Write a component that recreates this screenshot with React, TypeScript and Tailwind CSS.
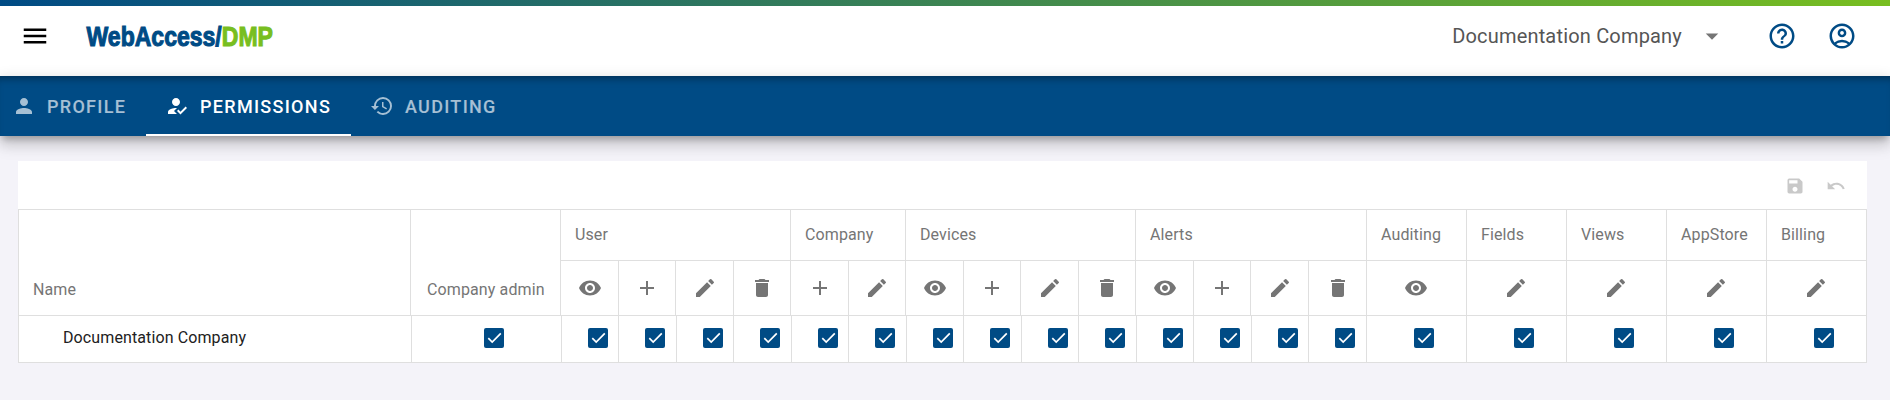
import React from "react";
import { MdMenu, MdPerson, MdHowToReg, MdHistory, MdHelpOutline, MdOutlineAccountCircle, MdArrowDropDown, MdVisibility, MdAdd, MdEdit, MdDelete, MdSave } from "react-icons/md";

type Kind = "view" | "add" | "edit" | "delete";

const icons = { view: MdVisibility, add: MdAdd, edit: MdEdit, delete: MdDelete };

const groups: { name: string; kinds: Kind[]; head: string[]; body: string[] }[] = [
  { name: "User", kinds: ["view", "add", "edit", "delete"], head: ["w-[58px]", "w-[57px]", "w-[58px]", "w-[57px]"], body: ["w-[57px]", "w-[58px]", "w-[57px]", "w-[58px]"] },
  { name: "Company", kinds: ["add", "edit"], head: ["w-[58px]", "w-[57px]"], body: ["w-[57px]", "w-[58px]"] },
  { name: "Devices", kinds: ["view", "add", "edit", "delete"], head: ["w-[58px]", "w-[57px]", "w-[58px]", "w-[57px]"], body: ["w-[57px]", "w-[58px]", "w-[57px]", "w-[58px]"] },
  { name: "Alerts", kinds: ["view", "add", "edit", "delete"], head: ["w-[58px]", "w-[57px]", "w-[58px]", "w-[58px]"], body: ["w-[57px]", "w-[58px]", "w-[57px]", "w-[58px]"] },
  { name: "Auditing", kinds: ["view"], head: ["w-[100px]"], body: ["w-[100px]"] },
  { name: "Fields", kinds: ["edit"], head: ["w-[100px]"], body: ["w-[100px]"] },
  { name: "Views", kinds: ["edit"], head: ["w-[100px]"], body: ["w-[100px]"] },
  { name: "AppStore", kinds: ["edit"], head: ["w-[100px]"], body: ["w-[100px]"] },
  { name: "Billing", kinds: ["edit"], head: ["w-[100px]"], body: ["w-[100px]"] },
];

function Checkbox() {
  return (
    <span role="checkbox" aria-checked="true" className="flex size-5 shrink-0 items-center justify-center rounded-[2px] bg-[#004b85]">
      <svg viewBox="0 0 20 20" className="size-5" fill="none" stroke="white" strokeWidth="1.7">
        <path d="M4.3 10.2 8.2 14 16.8 5.4" />
      </svg>
    </span>
  );
}

function Tab({ icon, label, className }: { icon: React.ReactNode; label: string; className: string }) {
  return (
    <div className={"flex h-[60px] items-center text-[18px] font-medium tracking-[1.3px] " + className}>
      {icon}
      <span>{label}</span>
    </div>
  );
}

export default function App() {
  return (
    <div className="h-[400px] w-full overflow-hidden bg-[#f4f3f9] font-['Roboto',sans-serif]">
      <div className="h-1.5 bg-linear-to-r/srgb from-[#004b85] to-[#78be20]" />
      <header className="flex h-[70px] items-center bg-white pb-2.5 pl-[20px]">
        <MdMenu className="size-[30px] text-black" />
        <svg viewBox="0 0 192 36" className="ml-[36px] h-9 w-[192px] overflow-visible">
          <text transform="translate(0.5 28) scale(0.823 1)" className="font-['Liberation_Sans',sans-serif] text-[28px] font-bold" strokeWidth="1.1">
            <tspan fill="#004b85" stroke="#004b85">WebAccess/</tspan>
            <tspan fill="#78be20" stroke="#78be20">DMP</tspan>
          </text>
        </svg>
        <div className="ml-auto flex items-center">
          <span className="text-[20px] leading-7 tracking-[0.18px] text-[#555]">Documentation Company</span>
          <MdArrowDropDown className="ml-[15px] size-[30px] text-[#757575]" />
          <MdHelpOutline className="ml-[40px] size-[30px] text-[#004b85]" />
          <MdOutlineAccountCircle className="mr-[33px] ml-[30px] size-[30px] text-[#004b85]" />
        </div>
      </header>
      <nav className="flex h-[60px] bg-[#004b85] shadow-[inset_0_8px_8px_-6px_rgba(0,0,0,0.4),0_6px_6px_-3px_rgba(0,0,0,0.2),0_10px_14px_1px_rgba(0,0,0,0.1),0_4px_14px_1px_rgba(0,0,0,0.14)]">
        <Tab icon={<MdPerson className="mr-[11px] size-6" />} label="PROFILE" className="w-[146px] pl-3 text-white/65" />
        <Tab icon={<MdHowToReg className="mr-[11px] size-6" />} label="PERMISSIONS" className="w-[205px] border-b-2 border-white pt-0.5 pl-[19px] text-white" />
        <Tab icon={<MdHistory className="mr-[11px] size-6" />} label="AUDITING" className="pl-[19px] text-white/65" />
      </nav>
      <main className="ml-[18px] w-[1849px] pt-[25px]">
        <div className="flex h-12 items-center justify-end bg-white pt-0.5 text-[#c9c9c9]">
          <MdSave className="mr-[21px] size-5" />
          <svg viewBox="0 0 24 24" className="mr-[21px] size-5" fill="currentColor">
            <path d="M12.5 8C9.85 8 7.45 9 5.6 10.6L2 7v9h9l-3.62-3.62C8.77 11.22 10.54 10.5 12.5 10.5c3.54 0 6.55 2.31 7.6 5.5l2.37-.78C21.08 11.03 17.15 8 12.5 8Z" />
          </svg>
        </div>
        <div className="border-t border-l border-[#dfdfdf] bg-white">
          <div className="flex h-[106px] text-[16px] leading-6 tracking-[0.12px] text-[#757575]">
            <div className="flex w-[392px] items-end border-r border-b border-[#dfdfdf] pb-[13px] pl-3.5">Name</div>
            <div className="flex w-[150px] items-end border-r border-b border-[#dfdfdf] pb-[13px] pl-4 whitespace-nowrap">Company admin</div>
            {groups.map((g) => (
              <div key={g.name}>
                <div className="flex h-[51px] items-center border-r border-b border-[#dfdfdf] pl-3.5">{g.name}</div>
                <div className="flex">
                  {g.kinds.map((k, i) => {
                    const Icon = icons[k];
                    return (
                      <div key={k} className={"flex h-[55px] items-center justify-center border-r border-b border-[#dfdfdf] " + g.head[i] + (g.kinds.length === 1 ? " pr-px" : "")}>
                        <Icon className="size-6" />
                      </div>
                    );
                  })}
                </div>
              </div>
            ))}
          </div>
          <div className="flex h-[47px] text-[16px] tracking-[0.11px] text-[#212121]">
            <div className="flex w-[393px] items-center border-r border-b border-[#dfdfdf] pb-[3px] pl-[44px]">Documentation Company</div>
            <div className="flex w-[150px] items-start border-r border-b border-[#dfdfdf] pt-3 pl-[72px]"><Checkbox /></div>
            {groups.map((g) =>
              g.kinds.map((k, i) => (
                <div key={g.name + k} className={"flex items-start border-r border-b border-[#dfdfdf] pt-3 " + g.body[i] + (g.kinds.length === 1 ? " pl-[47px]" : " pl-[26px]")}>
                  <Checkbox />
                </div>
              ))
            )}
          </div>
        </div>
      </main>
    </div>
  );
}
